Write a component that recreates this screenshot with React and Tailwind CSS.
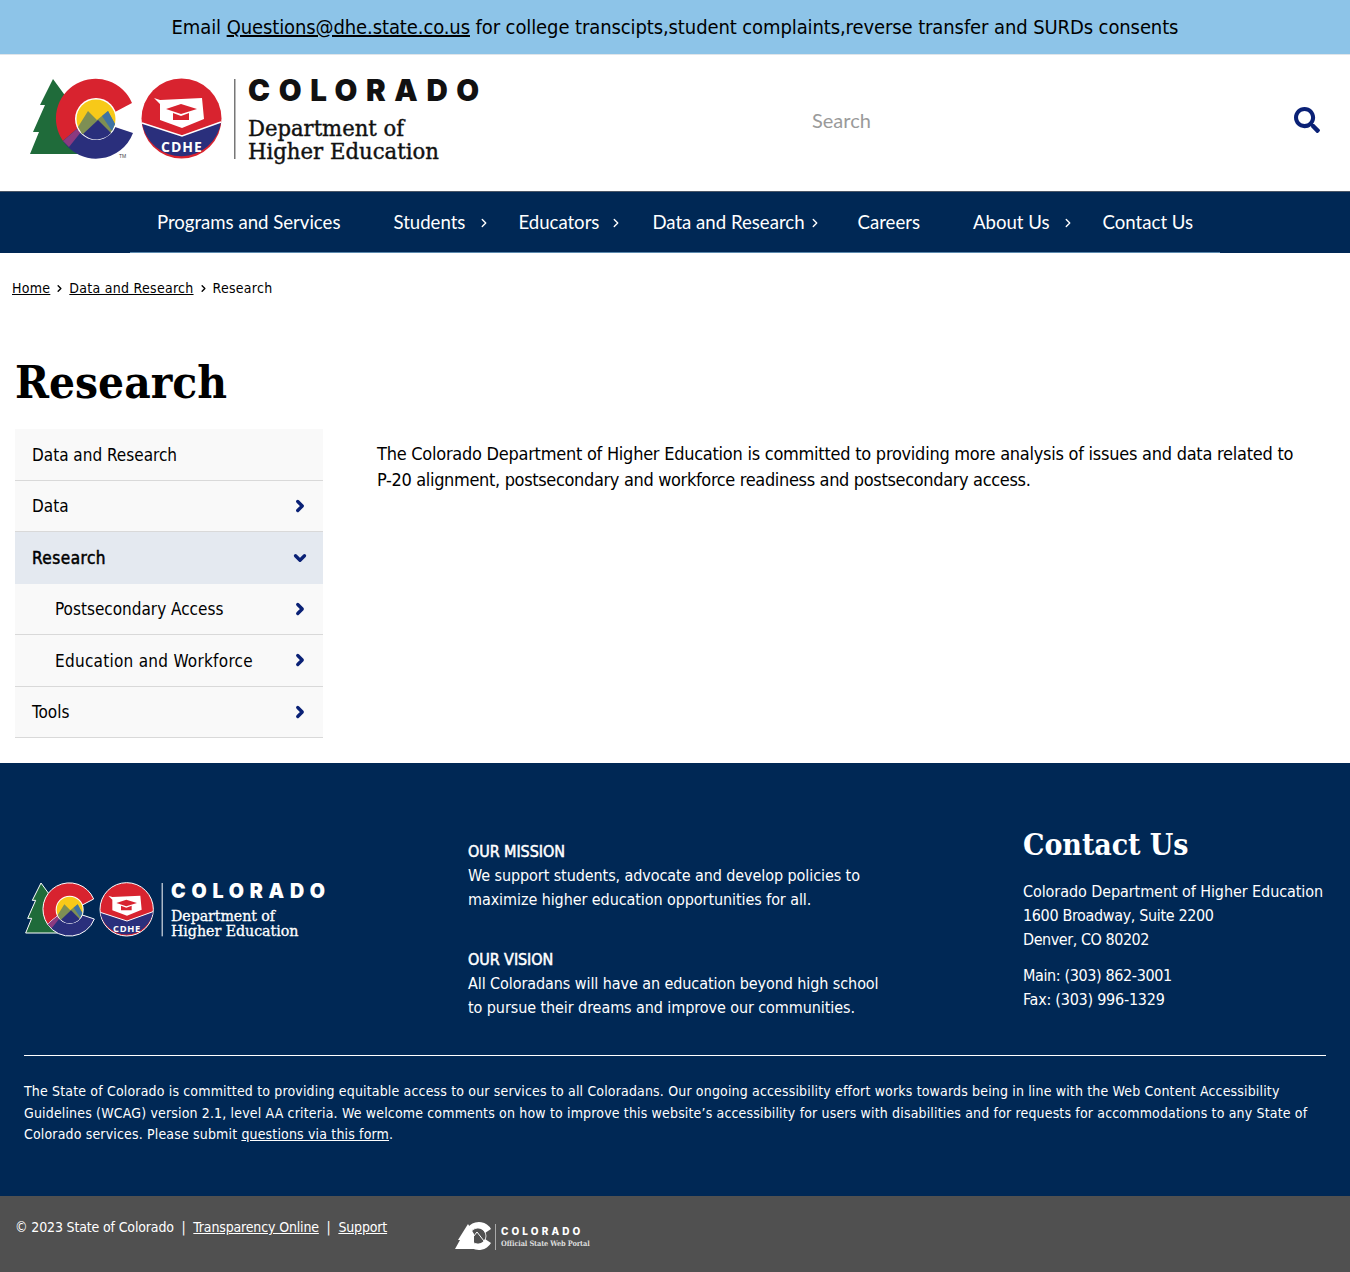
import React from "react";
import { ChevronRight, ChevronDown } from "lucide-react";
import { FaSearch } from "react-icons/fa";

const navItems = [
  { label: "Programs and Services" },
  { label: "Students", chev: "left-[calc(100%-14.5px)]" },
  { label: "Educators", chev: "left-[calc(100%-16.5px)]" },
  { label: "Data and Research", chev: "left-[calc(100%-23.5px)]" },
  { label: "Careers" },
  { label: "About Us", chev: "left-[calc(100%-15.5px)]" },
  { label: "Contact Us" },
];

const sideItems = [
  { label: "Data and Research", kind: "head", h: "h-[52px]" },
  { label: "Data", kind: "item", h: "h-[51px]" },
  { label: "Research", kind: "open", h: "h-[52px]", track: "tracking-[0.5px]" },
  { label: "Postsecondary Access", kind: "sub", h: "h-[51px]" },
  { label: "Education and Workforce", kind: "sub", h: "h-[52px]", track: "tracking-[0.27px]" },
  { label: "Tools", kind: "item", h: "h-[51px]" },
];

const fakeBold = "[-webkit-text-stroke:0.5px_currentColor]";

function Logo({ dark, className }) {
  const ink = dark ? "#ffffff" : "#111111";
  const edge = dark ? "#ffffff" : "none";
  const sw = dark ? 1.5 : 0;
  return (
    <svg viewBox="28 76 470 90" className={className}>
      {/* tree */}
      <path d="M53 79 L40 105 L45 105 L33 132 L39 132 L30 154 L82 154 L72 105 Z" fill="#1f6b3a" stroke={edge} strokeWidth={sw} />
      {/* C */}
      <path d="M132 103 A39.6 39.6 0 1 0 63 141 L78 128 A20.5 20.5 0 0 1 115 112 Z" fill="#d8232f" stroke={edge} strokeWidth={sw} />
      <path d="M63 141 A39.6 39.6 0 0 0 133 133 L115 127 A20.5 20.5 0 0 1 78 128 Z" fill="#2a2f7c" stroke={edge} strokeWidth={sw} />
      <path d="M63 141 L78 128 L81 132 L69 147 Z" fill="#8b3a80" />
      <circle cx="96" cy="119" r="21" fill="#fff" />
      <circle cx="96" cy="119" r="19.5" fill="#f7c919" />
      <path d="M78 127 L88 111 L97 120 L108 111 L115 124 L110 134 L82 134 Z" fill="#7e8f54" />
      <path d="M102 116 L108 111 L115 124 L112 131 Z" fill="#3f73a4" />
      <path d="M83 134 L98 120 L111 133 A19.5 19.5 0 0 1 83 134 Z" fill="#2a2f7c" />
      {!dark && <text x="119" y="158" fontSize="5" fill="#444" fontFamily="'Liberation Sans',sans-serif">TM</text>}
      {/* CDHE badge */}
      <circle cx="181.5" cy="118.5" r="40" fill="#d8232f" stroke={edge} strokeWidth={sw} />
      <path d="M142 123 L182 136 L221 122 A40 40 0 0 1 142 123 Z" fill="#2a2f7c" />
      <path d="M142 123 L182 136 L221 122" fill="none" stroke="#fff" strokeWidth="1.5" />
      <path d="M154 98 L160 100 L202 98 L204 119 L182 128 L160 120 L160 104 Z" fill="#fff" />
      <path d="M166 109 L181 104 L197 109 L181 114 Z M173 113 L181 116 L189 113 L189 120 L173 120 Z" fill="#d8232f" />
      <text x="182" y="152" textAnchor="middle" fontSize="14" fontWeight="700" fill="#fff" fontFamily="'Open Sans',sans-serif" letterSpacing="1">CDHE</text>
      {/* divider + wordmark */}
      <rect x="234" y="79" width="1.5" height="80" fill={dark ? "#fff" : "#777"} />
      <text x="248" y="101" fontSize="29.5" fontWeight="900" fill={ink} fontFamily="Inter,sans-serif" letterSpacing="8.6">COLORADO</text>
      <text x="248" y="136" fontSize="22.5" fill={ink} stroke={ink} strokeWidth="0.4" fontFamily="'DejaVu Serif Condensed',serif" textLength="156" lengthAdjust="spacingAndGlyphs">Department of</text>
      <text x="248" y="159" fontSize="22.5" fill={ink} stroke={ink} strokeWidth="0.4" fontFamily="'DejaVu Serif Condensed',serif" textLength="191" lengthAdjust="spacingAndGlyphs">Higher Education</text>
    </svg>
  );
}

function PortalLogo() {
  return (
    <svg viewBox="455 1220 140 32" className="w-[140px] h-[32px]">
      <path d="M468 1224 L474 1234 L474 1249 L455 1249 L460 1240 L458 1240 Z" fill="#fff" />
      <path d="M491 1229 A14 14 0 1 0 491 1243 L485 1239 A8 8 0 1 1 485 1233 Z" fill="#fff" />
      <circle cx="478" cy="1236" r="8" fill="none" stroke="#fff" strokeWidth="0.8" />
      <path d="M470 1241 L477 1232 L484 1241" fill="none" stroke="#fff" strokeWidth="1" />
      <rect x="495" y="1224" width="1" height="26" fill="#aaa" />
      <text x="501" y="1235" fontSize="10" fontWeight="800" fill="#fff" fontFamily="Inter,sans-serif" letterSpacing="3.1">COLORADO</text>
      <text x="501" y="1246" fontSize="7.4" fontWeight="700" fill="#ddd" fontFamily="'DejaVu Serif Condensed',serif">Official State Web Portal</text>
    </svg>
  );
}

function Crumb() {
  return <ChevronRight className="w-[11px] h-[11px] mx-[4px]" strokeWidth={3} />;
}

export default function App() {
  return (
    <div className="min-h-[1272px] bg-white text-black font-['DejaVu_Sans_Condensed','DejaVu_Sans',sans-serif]">
      <div className="h-[55px] bg-[#8dc4e8] border-b border-[#dfe5ea] flex items-center justify-center text-[20px] tracking-[-0.1px] text-black">
        <p>
          Email <a href="#" className="underline">Questions@dhe.state.co.us</a> for college transcipts,student complaints,reverse transfer and SURDs consents
        </p>
      </div>

      <header className="h-[136px] flex items-start pl-[28px] pr-[30px] pt-[21px]">
        <Logo className="w-[470px] h-[90px] shrink-0" />
        <div className="flex-1 flex items-center justify-between pl-[314px] pt-[29px]">
          <span className="text-[20px] text-[#9a9a9a] font-['Lato',sans-serif]">Search</span>
          <FaSearch className="w-[26px] h-[26px] text-[#0a2176]" />
        </div>
      </header>

      <nav className="h-[62px] bg-[#002855] flex justify-center border-t border-[#4a5666]">
        <ul className="w-[1090px] h-full pt-[2px] flex items-center justify-center border-b border-[#5b89ad] font-['Lato',sans-serif] text-[18.6px] text-white">
          {navItems.map((n) => (
            <li key={n.label} className="relative px-[26.5px] whitespace-nowrap">
              {n.label}
              {n.chev && <ChevronRight className={`absolute top-[7px] w-[14px] h-[14px] ${n.chev}`} strokeWidth={2.4} />}
            </li>
          ))}
        </ul>
      </nav>

      <div className="pl-[12px] pt-[26px] text-[14px] tracking-[0.28px] flex items-center h-[44px]">
        <a href="#" className="underline">Home</a>
        <Crumb />
        <a href="#" className="underline">Data and Research</a>
        <Crumb />
        <span>Research</span>
      </div>

      <h1 className="mt-[52px] pl-[15px] h-[80px] text-[45.5px] leading-[66px] font-bold font-['DejaVu_Serif_Condensed',serif]">Research</h1>

      <main className="flex h-[334px] pl-[15px]">
        <aside className="w-[308px] h-[309px] bg-[#f9f9f9] text-[17px]">
          {sideItems.map((s) => (
            <div
              key={s.label}
              className={`${s.h} pt-[2px] flex items-center justify-between pr-[14px] ${s.kind === "sub" ? "pl-[40px]" : "pl-[17px]"} ${s.kind === "open" ? "bg-[#e4e9f0]" : "border-b border-[#d9d9d9]"}`}
            >
              <span className={`${s.track || ""} ${s.kind === "open" ? fakeBold : ""}`}>{s.label}</span>
              {s.kind === "open" && <ChevronDown className="w-[18px] h-[18px] -mt-[3px] text-[#0a2176]" strokeWidth={4.4} />}
              {(s.kind === "item" || s.kind === "sub") && <ChevronRight className="w-[18px] h-[18px] -mt-[3px] text-[#0a2176]" strokeWidth={4.4} />}
            </div>
          ))}
        </aside>
        <div className="ml-[54px] w-[935px] text-[18px] tracking-[-0.25px] leading-[26px] pt-[12px]">
          The Colorado Department of Higher Education is committed to providing more analysis of issues and data related to<br />
          <span className="tracking-[-0.34px]">P-20 alignment, postsecondary and workforce readiness and postsecondary access.</span>
        </div>
      </main>

      <footer className="bg-[#002855] text-white h-[433px] text-[16px] tracking-[-0.08px] leading-[24px]">
        <div className="h-[292px] flex">
          <div className="w-[468px] pl-[24px] pt-[118px]">
            <Logo dark className="w-[314px] h-[60px]" />
          </div>
          <div className="w-[555px] pt-[77px]">
            <p className={fakeBold}>OUR MISSION</p>
            <p className="w-[420px]">We support students, advocate and develop policies to maximize higher education opportunities for all.</p>
            <p className={`${fakeBold} mt-[36px]`}>OUR VISION</p>
            <p className="w-[420px]">All Coloradans will have an education beyond high school to pursue their dreams and improve our communities.</p>
          </div>
          <div className="pt-[60px]">
            <h2 className="text-[30px] leading-[44px] font-bold font-['DejaVu_Serif_Condensed',serif]">Contact Us</h2>
            <p className="mt-[13px]">
              Colorado Department of Higher Education<br />
              <span className="tracking-[-0.36px]">1600 Broadway, Suite 2200</span><br />
              <span className="tracking-[-0.45px]">Denver, CO 80202</span>
            </p>
            <p className="mt-[12px]">
              <span className="tracking-[-0.38px]">Main: (303) 862-3001</span><br />
              <span className="tracking-[-0.24px]">Fax: (303) 996-1329</span>
            </p>
          </div>
        </div>
        <div className="mx-[24px] border-t border-white pt-[25px] text-[14px] tracking-[0.16px] leading-[21.5px]">
          The State of Colorado is committed to providing equitable access to our services to all Coloradans. Our ongoing accessibility effort works towards being in line with the Web Content Accessibility Guidelines (WCAG) version 2.1, level AA criteria. We welcome comments on how to improve this website’s accessibility for users with disabilities and for requests for accommodations to any State of Colorado services. Please submit <a href="#" className="underline">questions via this form</a>.
        </div>
      </footer>

      <div className="h-[76px] bg-[#505050] text-white text-[14px] tracking-[-0.15px] flex pl-[15px]">
        <p className="w-[440px] pt-[21px]">
          © 2023 State of Colorado &nbsp;|&nbsp; <a href="#" className="underline">Transparency Online</a> &nbsp;|&nbsp; <a href="#" className="underline">Support</a>
        </p>
        <div className="pt-[24px]">
          <PortalLogo />
        </div>
      </div>
    </div>
  );
}
